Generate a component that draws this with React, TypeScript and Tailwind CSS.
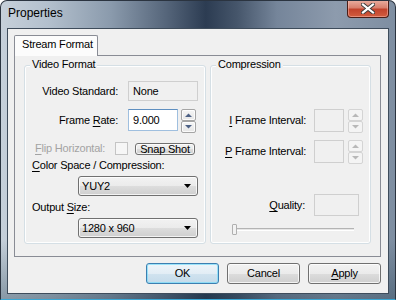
import React from 'react';

const btnBg =
  'border border-[#707070] rounded-[3px] bg-[linear-gradient(180deg,#f2f2f2_0%,#ebebeb_50%,#dddddd_50%,#cfcfcf_100%)] shadow-[inset_0_0_0_1px_rgba(255,255,255,0.75)]';

const U: React.FC<{ children: React.ReactNode }> = ({ children }) => (
  <span className="underline underline-offset-[2px] decoration-[1px]">{children}</span>
);

const Arrow: React.FC<{ up?: boolean; disabled?: boolean }> = ({ up, disabled }) => (
  <svg width="7" height="4" viewBox="0 0 7 4">
    <polygon
      points={up ? '0,4 3.5,0.5 7,4' : '0,0 3.5,3.5 7,0'}
      fill={disabled ? '#b8b8b8' : '#4d6185'}
    />
  </svg>
);

const Spin: React.FC<{ disabled?: boolean }> = ({ disabled }) => {
  const cls = disabled
    ? 'border border-[#d4d4d4] rounded-[2px] bg-[#f4f4f4]'
    : 'border border-[#a5a5a5] rounded-[2px] bg-[linear-gradient(180deg,#f6f6f6_0%,#e6e6e6_100%)] shadow-[inset_0_0_0_1px_rgba(255,255,255,0.8)]';
  return (
    <div className="flex flex-col w-[15px]">
      <div className={`${cls} h-[12px] flex items-center justify-center`}>
        <Arrow up disabled={disabled} />
      </div>
      <div className={`${cls} h-[12px] flex items-center justify-center`}>
        <Arrow disabled={disabled} />
      </div>
    </div>
  );
};

const Combo: React.FC<{ value: string }> = ({ value }) => (
  <div className={`${btnBg} ml-[53px] w-[120px] h-[20px] flex items-center pl-[3px] pr-[6px]`}>
    <span className="flex-1">{value}</span>
    <svg width="7" height="4" viewBox="0 0 7 4">
      <polygon points="0,0 7,0 3.5,4" fill="#000" />
    </svg>
  </div>
);

const Group: React.FC<{ label: string; className: string; children: React.ReactNode }> = ({ label, className, children }) => (
  <div className={`relative h-[179px] border border-[#d5dfe5] rounded-[3px] shadow-[inset_0_0_0_1px_rgba(255,255,255,0.9)] ${className}`}>
    <span className="absolute left-[5px] -top-[8px] px-[2px] bg-[#f0f0f0] leading-[13px]">{label}</span>
    {children}
  </div>
);

const App: React.FC = () => {
  return (
    <div className="w-[396px] h-[300px] flex flex-col overflow-hidden rounded-t-[7px] border border-[#2b3440] border-b-[#3aa9d6] font-['Liberation_Sans',Arial,sans-serif] text-[11px] tracking-[-0.2px] text-black bg-[linear-gradient(180deg,rgba(0,0,0,0)_80%,rgba(20,50,70,0.35)_100%),linear-gradient(90deg,#c6d0da_0%,#b3c0cd_12%,#8a9aac_28%,#55657a_42%,#2c3c52_52%,#46566b_60%,#75859a_70%,#8d9bad_85%,#7e8ea1_100%)]">
      {/* Title bar */}
      <div className="h-[27px] flex items-start">
        <span className="pl-[7px] pt-[5px] text-[12px] tracking-normal leading-[14px] text-black">Properties</span>
        <div className="ml-auto mr-[6px] -mt-[1px] w-[42px] h-[18px] rounded-b-[4px] border border-[#4a1d16] border-t-0 bg-[linear-gradient(180deg,#eab0a2_0%,#d8806e_45%,#c2432c_55%,#d25d3f_100%)] shadow-[inset_0_0_0_1px_rgba(255,200,190,0.45)] flex items-center justify-center">
          <svg width="14" height="11" viewBox="0 0 14 11">
            <path d="M2 1.5 L12 9.5 M12 1.5 L2 9.5" stroke="#3b3b3b" strokeWidth="4" strokeLinecap="square" />
            <path d="M2 1.5 L12 9.5 M12 1.5 L2 9.5" stroke="#ffffff" strokeWidth="2.2" strokeLinecap="square" />
          </svg>
        </div>
      </div>

      {/* Client area */}
      <div className="flex-1 px-[6px] pb-[5px]">
        <div className="h-[266px] border border-[#3e4c5b] bg-[#f0f0f0] flex flex-col pt-[6px] pl-[6px] pr-[7px]">
          {/* Tab */}
          <div className="relative z-10 w-[84px] h-[21px] -mb-[1px] border border-b-0 border-[#898c95] rounded-t-[2px] bg-[#fcfcfc] pl-[7px] pt-[2px] leading-[13px]">
            Stream Format
          </div>
          {/* Panel */}
          <div className="h-[202px] border border-[#898c95] bg-[#f0f0f0] flex items-start pt-[9px] pl-[9px] gap-[4px]">
            <Group label="Video Format" className="w-[182px]">
              <div className="flex flex-col pt-[15px]">
                <div className="h-[20px] flex items-center">
                  <span className="w-[93px] text-right">Video Standard:</span>
                  <div className="ml-[10px] w-[70px] h-[20px] border border-[#cfcfcf] bg-[#f0f0f0] flex items-center pl-[4px]">None</div>
                </div>
                <div className="mt-[8px] h-[24px] flex items-start">
                  <span className="w-[93px] h-[22px] flex items-center justify-end">
                    Frame&nbsp;<U>R</U>ate:
                  </span>
                  <div className="ml-[10px] w-[50px] h-[22px] border border-[#9fbfdf] border-t-[#5f8fc0] bg-white flex items-center pl-[4px]">9.000</div>
                  <div className="ml-[3px]">
                    <Spin />
                  </div>
                </div>
                <div className="mt-[9px] h-[13px] flex items-center pl-[10px]">
                  <span className="w-[80px] text-[#a3a3a3]">
                    <U>F</U>lip Horizontal:
                  </span>
                  <div className="w-[13px] h-[13px] border border-[#c4c4c4] bg-[#f6f6f6]" />
                  <div className={`${btnBg} ml-[7px] w-[60px] h-[12px] flex items-center justify-center leading-[10px]`}>Snap Shot</div>
                </div>
                <div className="mt-[4px] h-[13px] leading-[13px] pl-[7px]">
                  <U>C</U>olor Space / Compression:
                </div>
                <div className="mt-[4px] h-[20px]">
                  <Combo value="YUY2" />
                </div>
                <div className="mt-[5px] h-[13px] leading-[13px] pl-[7px]">
                  Output <U>S</U>ize:
                </div>
                <div className="mt-[4px] h-[20px]">
                  <Combo value="1280 x 960" />
                </div>
              </div>
            </Group>

            <Group label="Compression" className="w-[161px]">
              <div className="flex flex-col pt-[43px]">
                <div className="h-[24px] flex items-start">
                  <span className="w-[95px] h-[22px] flex items-center justify-end">
                    <U>I</U>&nbsp;Frame Interval:
                  </span>
                  <div className="ml-[8px] w-[30px] h-[23px] border border-[#cfcfcf] bg-[#f0f0f0]" />
                  <div className="ml-[4px]">
                    <Spin disabled />
                  </div>
                </div>
                <div className="mt-[7px] h-[24px] flex items-start">
                  <span className="w-[95px] h-[22px] flex items-center justify-end">
                    <U>P</U>&nbsp;Frame Interval:
                  </span>
                  <div className="ml-[8px] w-[30px] h-[23px] border border-[#cfcfcf] bg-[#f0f0f0]" />
                  <div className="ml-[4px]">
                    <Spin disabled />
                  </div>
                </div>
                <div className="mt-[30px] h-[22px] flex items-center">
                  <span className="w-[94px] text-right">
                    <U>Q</U>uality:
                  </span>
                  <div className="ml-[9px] w-[45px] h-[22px] border border-[#cfcfcf] bg-[#f0f0f0]" />
                </div>
                <div className="mt-[8px] h-[11px] pl-[21px]">
                  <div className="relative w-[122px] h-[11px] flex items-center">
                    <div className="w-full h-[3px] border-t border-[#b4b4b4] border-b border-b-white bg-[#e6e6e6]" />
                    <div className="absolute left-0 top-0 w-[5px] h-[11px] border border-[#b0b0b0] rounded-[1px] bg-[#f2f2f2]" />
                  </div>
                </div>
              </div>
            </Group>
          </div>

          {/* Dialog buttons */}
          <div className="mt-[6px] flex justify-end gap-[8px] pr-[0px]">
            <div className="w-[73px] h-[21px] border border-[#3c7fb1] rounded-[3px] bg-[linear-gradient(180deg,#eef5fa_0%,#e2edf5_50%,#d1e3ef_50%,#c4dbea_100%)] shadow-[inset_0_0_0_1px_rgba(120,220,250,0.7)] flex items-center justify-center">OK</div>
            <div className={`${btnBg} w-[73px] h-[21px] flex items-center justify-center`}>Cancel</div>
            <div className={`${btnBg} w-[73px] h-[21px] flex items-center justify-center`}>
              <U>A</U>pply
            </div>
          </div>
        </div>
      </div>
    </div>
  );
};

export default App;
